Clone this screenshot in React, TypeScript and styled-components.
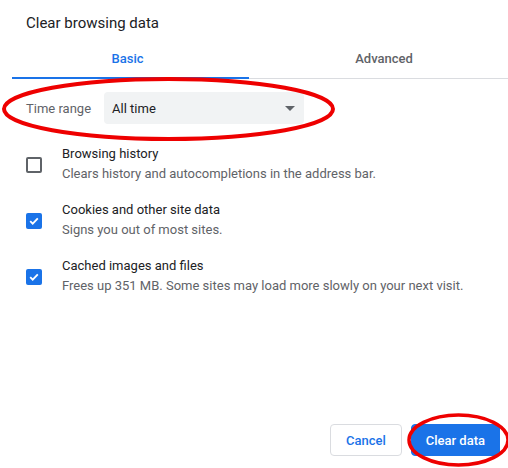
import React from 'react';
import styled, { createGlobalStyle } from 'styled-components';

const colors = {
  text: '#202124',
  muted: '#5f6368',
  blue: '#1a73e8',
  line: '#dadce0',
  field: '#f1f3f4',
  mark: '#ee0000',
};

const GlobalStyle = createGlobalStyle`
  html, body {
    margin: 0;
    padding: 0;
    background: #fff;
    overflow: hidden;
  }
  body {
    font-family: Roboto, 'Liberation Sans', Arial, sans-serif;
    color: ${colors.text};
  }
`;

const items = [
  { title: 'Browsing history', sub: 'Clears history and autocompletions in the address bar.', checked: false },
  { title: 'Cookies and other site data', sub: 'Signs you out of most sites.', checked: true },
  { title: 'Cached images and files', sub: 'Frees up 351 MB. Some sites may load more slowly on your next visit.', checked: true },
];

const App = () => {
  return (
    <>
      <GlobalStyle />
      <Dialog>
        <Title>Clear browsing data</Title>

        <Tabs>
          <Tab active>Basic</Tab>
          <Tab>Advanced</Tab>
        </Tabs>

        <RangeRow>
          <RangeLabel>Time range</RangeLabel>
          <Select>
            <span>All time</span>
            <Caret />
          </Select>
        </RangeRow>

        <List>
          {items.map((item) => (
            <Item key={item.title}>
              <Box checked={item.checked}>
                {item.checked && (
                  <svg width="12" height="12" viewBox="0 0 12 12">
                    <path d="M2.2 6.2l2.5 2.5 5.1-5.3" fill="none" stroke="#fff" strokeWidth="1.8" />
                  </svg>
                )}
              </Box>
              <ItemText>
                <ItemTitle>{item.title}</ItemTitle>
                <ItemSub>{item.sub}</ItemSub>
              </ItemText>
            </Item>
          ))}
        </List>

        <Footer>
          <Button>Cancel</Button>
          <Button primary>Clear data</Button>
        </Footer>

        <Marks width="508" height="468" viewBox="0 0 508 468">
          <ellipse cx="168.5" cy="109" rx="164.5" ry="30" fill="none" stroke={colors.mark} strokeWidth="4" />
          <ellipse cx="458.5" cy="440" rx="49.5" ry="25" fill="none" stroke={colors.mark} strokeWidth="3.5" />
        </Marks>
      </Dialog>
    </>
  );
};

export default App;

const Dialog = styled.div`
  position: relative;
  width: 508px;
  height: 468px;
  display: flex;
  flex-direction: column;
  overflow: hidden;
`;

const Title = styled.div`
  padding: 13px 26px 0;
  font-size: 15px;
  line-height: 20px;
  color: ${colors.text};
`;

const Tabs = styled.div`
  display: flex;
  margin-top: 5px;
  padding-left: 12px;
`;

const Tab = styled.div<{ active?: boolean }>`
  flex: 0 0 ${(p) => (p.active ? '237px' : '270px')};
  height: 41px;
  box-sizing: border-box;
  display: flex;
  align-items: center;
  justify-content: center;
  padding: ${(p) => (p.active ? '0 6px 0 0' : '0')};
  font-size: 13px;
  font-weight: 500;
  color: ${(p) => (p.active ? colors.blue : colors.muted)};
  box-shadow: inset 0 ${(p) => (p.active ? '-2px 0 ' + colors.blue : '-1px 0 ' + colors.line)};
`;

const RangeRow = styled.div`
  display: flex;
  align-items: center;
  gap: 13px;
  margin-top: 13px;
  padding-left: 26px;
`;

const RangeLabel = styled.span`
  font-size: 13px;
  color: ${colors.muted};
`;

const Select = styled.div`
  width: 200px;
  height: 32px;
  box-sizing: border-box;
  display: flex;
  align-items: center;
  justify-content: space-between;
  padding: 0 9px 0 8px;
  border-radius: 4px;
  background: ${colors.field};
  font-size: 13px;
  color: ${colors.text};
`;

const Caret = styled.span`
  width: 0;
  height: 0;
  border-left: 5px solid transparent;
  border-right: 5px solid transparent;
  border-top: 5px solid ${colors.muted};
  margin-top: 1px;
`;

const List = styled.div`
  display: flex;
  flex-direction: column;
  gap: 16px;
  margin-top: 20px;
  padding-left: 26px;
`;

const Item = styled.div`
  display: flex;
  align-items: center;
  gap: 20px;
`;

const Box = styled.div<{ checked?: boolean }>`
  width: 16px;
  height: 16px;
  box-sizing: border-box;
  border-radius: 2px;
  margin-top: 1px;
  display: flex;
  align-items: center;
  justify-content: center;
  background: ${(p) => (p.checked ? colors.blue : 'transparent')};
  border: ${(p) => (p.checked ? 'none' : `2px solid ${colors.muted}`)};
`;

const ItemText = styled.div`
  display: flex;
  flex-direction: column;
`;

const ItemTitle = styled.div`
  font-size: 13px;
  line-height: 20px;
  color: ${colors.text};
`;

const ItemSub = styled.div`
  font-size: 13px;
  line-height: 20px;
  color: ${colors.muted};
`;

const Footer = styled.div`
  margin-top: auto;
  display: flex;
  justify-content: flex-end;
  gap: 9px;
  padding: 0 8px 12px 0;
`;

const Button = styled.button<{ primary?: boolean }>`
  height: 32px;
  padding: 0 ${(p) => (p.primary ? '14px' : '15px')};
  box-sizing: border-box;
  border-radius: 4px;
  font-family: inherit;
  font-size: 13px;
  font-weight: 500;
  border: 1px solid ${(p) => (p.primary ? colors.blue : colors.line)};
  background: ${(p) => (p.primary ? colors.blue : '#fff')};
  color: ${(p) => (p.primary ? '#fff' : colors.blue)};
`;

const Marks = styled.svg`
  position: absolute;
  left: 0;
  top: 0;
  pointer-events: none;
`;
